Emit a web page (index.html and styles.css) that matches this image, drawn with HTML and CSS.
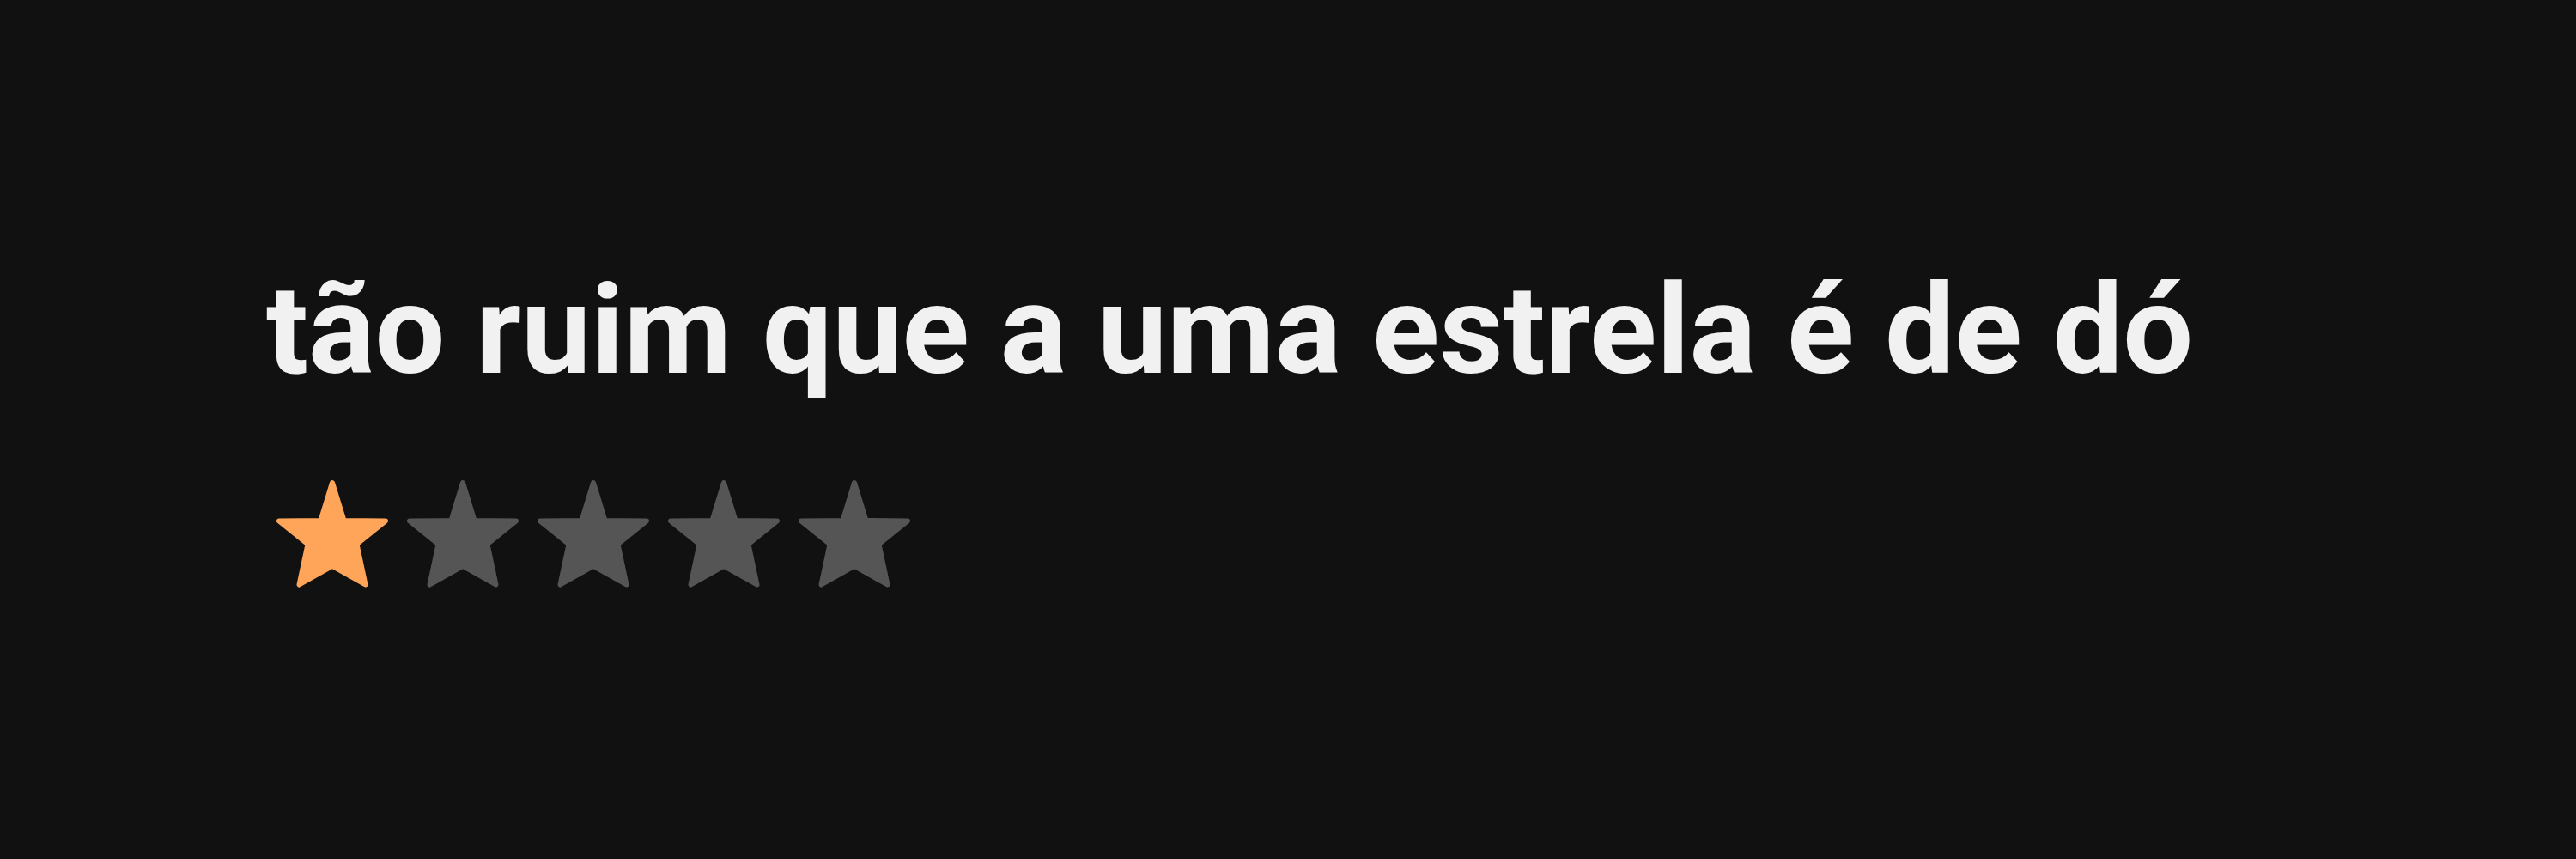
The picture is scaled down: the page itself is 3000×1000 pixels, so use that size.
FILE: index.html
```
<!DOCTYPE html>
<html lang="pt-BR">
<head>
	<meta charset="UTF-8">
	<title>Avaliação</title>
	<link rel="stylesheet" href="styles.css">
</head>
<body>
	<div class="review">
		<h1 class="title">tão ruim que a uma estrela é de dó</h1>
		<div class="stars">
			<svg class="star active" viewBox="0 0 152 152"><path d="M76 16L89.500 60L138 60.500L104.500 87.500L114.500 134.500L76 113L37.500 134.500L47.500 87.500L14 60.500L62.500 60Z"/></svg>
			<svg class="star" viewBox="0 0 152 152"><path d="M76 16L89.500 60L138 60.500L104.500 87.500L114.500 134.500L76 113L37.500 134.500L47.500 87.500L14 60.500L62.500 60Z"/></svg>
			<svg class="star" viewBox="0 0 152 152"><path d="M76 16L89.500 60L138 60.500L104.500 87.500L114.500 134.500L76 113L37.500 134.500L47.500 87.500L14 60.500L62.500 60Z"/></svg>
			<svg class="star" viewBox="0 0 152 152"><path d="M76 16L89.500 60L138 60.500L104.500 87.500L114.500 134.500L76 113L37.500 134.500L47.500 87.500L14 60.500L62.500 60Z"/></svg>
			<svg class="star" viewBox="0 0 152 152"><path d="M76 16L89.500 60L138 60.500L104.500 87.500L114.500 134.500L76 113L37.500 134.500L47.500 87.500L14 60.500L62.500 60Z"/></svg>
		</div>
	</div>
</body>
</html>
```

FILE: styles.css
```
*{margin: 0;padding: 0;box-sizing: border-box;}
body{
	background: #111112;
}
.review{
	height: 1000px;
	padding: 304px 0 0 310px;
}
.title{
	font: bold 145px/160px Roboto, sans-serif;
	letter-spacing: -.12px;
	color: #f1f1f1;
	white-space: nowrap;
}
.stars{
	display: flex;
	margin: 82px 0 0 1px;
}
.star{
	width: 152px;
	height: 152px;
	fill: #555;
	stroke: #555;
	stroke-width: 6;
	stroke-linejoin: round;
}
.star.active{
	fill: #ffa559;
	stroke: #ffa559;
}
```
